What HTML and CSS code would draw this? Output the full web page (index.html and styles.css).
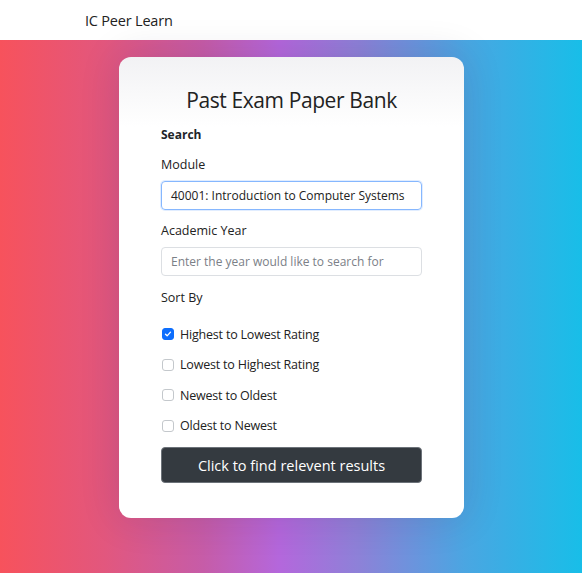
FILE: index.html
```html
<!DOCTYPE html>
<html>
<head>
<meta charset="utf-8">
<link rel="stylesheet" href="styles.css">
</head>
<body>
<nav class="navbar"><span class="brand">IC Peer Learn</span></nav>
<main class="stage">
  <div class="card">
    <h1 class="title">Past Exam Paper Bank</h1>
    <div class="section">Search</div>
    <label class="label">Module</label>
    <div class="input focused">40001: Introduction to Computer Systems</div>
    <label class="label">Academic Year</label>
    <div class="input placeholder">Enter the year would like to search for</div>
    <label class="label sort">Sort By</label>
    <div class="checks">
      <div class="check"><span class="box checked"><svg viewBox="0 0 12 12" width="12" height="12"><path d="M3 6.2l2 2 4-4.4" fill="none" stroke="#fff" stroke-width="1.6" stroke-linecap="round" stroke-linejoin="round"/></svg></span>Highest to Lowest Rating</div>
      <div class="check"><span class="box"></span>Lowest to Highest Rating</div>
      <div class="check"><span class="box"></span>Newest to Oldest</div>
      <div class="check"><span class="box"></span>Oldest to Newest</div>
    </div>
    <div class="btn">Click to find relevent results</div>
  </div>
</main>
</body>
</html>
```
FILE: styles.css
```css
* { box-sizing: border-box; }
html, body { margin: 0; padding: 0; }
body {
  width: 582px;
  height: 573px;
  overflow: hidden;
  font-family: "Open Sans", "Noto Sans", sans-serif;
  color: #212529;
}
.navbar {
  height: 40px;
  background: #fff;
  display: flex;
  align-items: center;
  padding-left: 85px;
}
.brand { font-size: 14.5px; color: #222; letter-spacing: -0.2px; }
.stage {
  height: 533px;
  background: linear-gradient(to right, #f7525c 0%, #e2577e 18%, #c65ca8 35%, #b467dc 48%, #8c82d8 62%, #4aa6e2 80%, #18bee8 100%);
  display: flex;
  justify-content: center;
  align-items: flex-start;
  padding-top: 17px;
  padding-left: 1px;
}
.card {
  width: 345px;
  height: 461px;
  background: linear-gradient(to bottom, #f2f2f4 0px, #ffffff 70px);
  border-radius: 12px;
  box-shadow: 0 0 40px rgba(40, 20, 60, 0.14);
  padding: 28px 42px 0 42px;
  display: flex;
  flex-direction: column;
}
.title {
  margin: 0;
  font-weight: 400;
  font-size: 21px;
  line-height: 30px;
  text-align: center;
  color: #222;
  letter-spacing: -0.4px;
}
.section {
  margin-top: 11px;
  font-size: 12px;
  font-weight: 700;
  line-height: 18px;
}
.label {
  margin-top: 12px;
  font-size: 12.5px;
  line-height: 18px;
  color: #222;
}
.input {
  margin-top: 7px;
  height: 29px;
  border: 1px solid #dcdfe3;
  border-radius: 4px;
  padding: 0 9px;
  font-size: 12px;
  line-height: 27px;
  color: #222;
  white-space: nowrap;
  overflow: hidden;
}
.input.focused {
  border-color: #86b7fe;
  box-shadow: 0 0 0 1px rgba(134, 183, 254, 0.25);
}
.input.placeholder { color: #7b8087; }
.label.sort { margin-top: 13px; }
.checks {
  margin-top: 12px;
  display: flex;
  flex-direction: column;
}
.check {
  height: 30.5px;
  display: flex;
  align-items: center;
  font-size: 12.5px;
  color: #222;
  letter-spacing: -0.2px;
}
.box {
  width: 12px;
  height: 12px;
  border: 1px solid #c4c8cc;
  border-radius: 3px;
  margin-left: 1px;
  margin-right: 6px;
  display: flex;
  align-items: center;
  justify-content: center;
  background: #fff;
}
.box.checked {
  background: #0d6efd;
  border-color: #0d6efd;
}
.btn {
  margin-top: 6px;
  height: 36px;
  background: #343a40;
  border: 1px solid #6c7279;
  border-radius: 4px;
  color: #fff;
  font-size: 14.5px;
  display: flex;
  align-items: center;
  justify-content: center;
}
```
